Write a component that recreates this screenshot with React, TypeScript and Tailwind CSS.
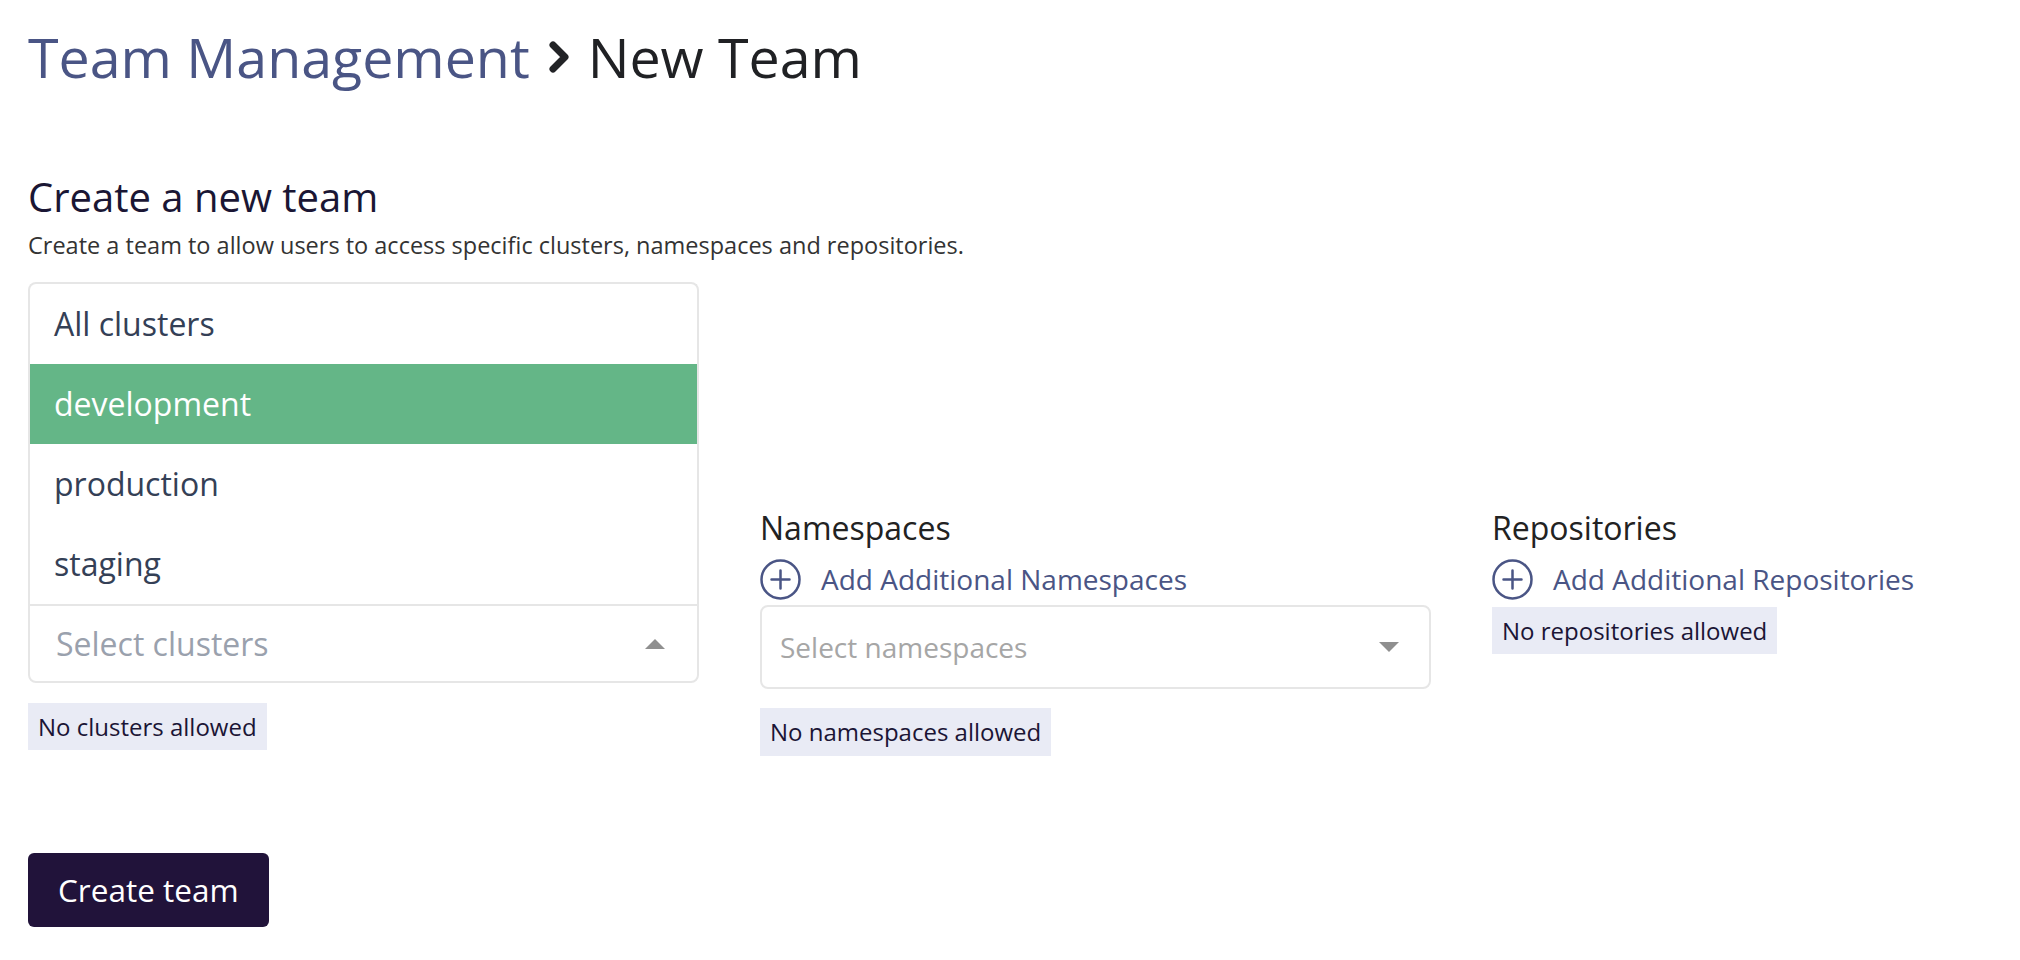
import React from 'react';

const clusterOptions = ['All clusters', 'development', 'production', 'staging'];

const AddIcon = () => (
  <svg width="41" height="41" viewBox="0 0 41 41" fill="none" stroke="#4a5585" strokeWidth="2.5" strokeLinecap="round">
    <circle cx="20.5" cy="20.5" r="19" />
    <path d="M20.5 11.5v18M11.5 20.5h18" />
  </svg>
);

const Triangle = ({ up }: { up?: boolean }) => (
  <svg width="20" height="10" viewBox="0 0 20 10" className="shrink-0">
    <path d={up ? 'M0 10 L10 0 L20 10 Z' : 'M0 0 L20 0 L10 10 Z'} fill="#8f8f8f" />
  </svg>
);

const Badge = ({ text, className = '' }: { text: string; className?: string }) => (
  <div className={`inline-flex self-start items-center bg-[#e9ebf5] px-[10px] text-[24px] text-[#1b1535] ${className}`}>
    {text}
  </div>
);

const AddRow = ({ label }: { label: string }) => (
  <div className="mt-[11px] flex h-[40px] items-center gap-[20px]">
    <AddIcon />
    <span className="text-[28px] text-[#4a5585]">{label}</span>
  </div>
);

const App = () => {
  return (
    <div className="min-h-screen bg-white px-[28px] pt-[24px] font-['Open_Sans',sans-serif]">
      <h1 className="flex items-center text-[55.5px] leading-[66px]">
        <span className="text-[#4a5585]">Team Management</span>
        <svg width="24" height="34" viewBox="0 0 24 34" className="mx-[17px]" fill="none">
          <path d="M6 5 L18 17 L6 29" stroke="#222326" strokeWidth="7" strokeLinecap="round" strokeLinejoin="round" />
        </svg>
        <span className="text-[#202124]">New Team</span>
      </h1>

      <h2 className="mt-[83px] text-[40px] leading-[48px] text-[#1a1634]">Create a new team</h2>
      <p className="mt-[9px] text-[23.5px] leading-[30px] text-[#333333]">
        Create a team to allow users to access specific clusters, namespaces and repositories.
      </p>

      <div className="mt-[248px] grid grid-cols-[671px_671px_1fr] gap-x-[61px]">
        {/* Clusters - dropdown open, covers the label and add row */}
        <div className="flex flex-col">
          <div className="h-[91px]" />
          <div className="relative mt-[5px]">
            <div className="absolute bottom-full left-0 right-0 z-10 overflow-hidden rounded-t-[8px] border-2 border-b-0 border-[#e6e6e6] bg-white">
              {clusterOptions.map((opt) => (
                <div
                  key={opt}
                  className={`flex h-[80px] items-center pl-[24px] text-[32px] ${
                    opt === 'development' ? 'bg-[#64b687] text-white' : 'text-[#344056]'
                  }`}
                >
                  {opt}
                </div>
              ))}
            </div>
            <div className="flex h-[79px] items-center justify-between rounded-b-[8px] border-2 border-[#e6e6e6] pl-[26px] pr-[32px]">
              <span className="text-[32px] text-[#9aa1ad]">Select clusters</span>
              <Triangle up />
            </div>
          </div>
          <Badge text="No clusters allowed" className="mt-[20px] h-[47px]" />
        </div>

        {/* Namespaces */}
        <div className="flex flex-col">
          <div className="text-[32px] leading-[40px] text-[#222]">Namespaces</div>
          <AddRow label="Add Additional Namespaces" />
          <div className="mt-[6px] flex h-[84px] items-center justify-between rounded-[8px] border-2 border-[#e6e6e6] pl-[18px] pr-[30px]">
            <span className="text-[28px] text-[#a6a6a6]">Select namespaces</span>
            <Triangle />
          </div>
          <Badge text="No namespaces allowed" className="mt-[19px] h-[48px]" />
        </div>

        {/* Repositories */}
        <div className="flex flex-col">
          <div className="text-[32px] leading-[40px] text-[#222]">Repositories</div>
          <AddRow label="Add Additional Repositories" />
          <Badge text="No repositories allowed" className="mt-[8px] h-[47px]" />
        </div>
      </div>

      <button className="mt-[97px] h-[74px] rounded-[6px] bg-[#21133a] px-[30px] text-[31.5px] text-white">
        Create team
      </button>
    </div>
  );
};

export default App;
